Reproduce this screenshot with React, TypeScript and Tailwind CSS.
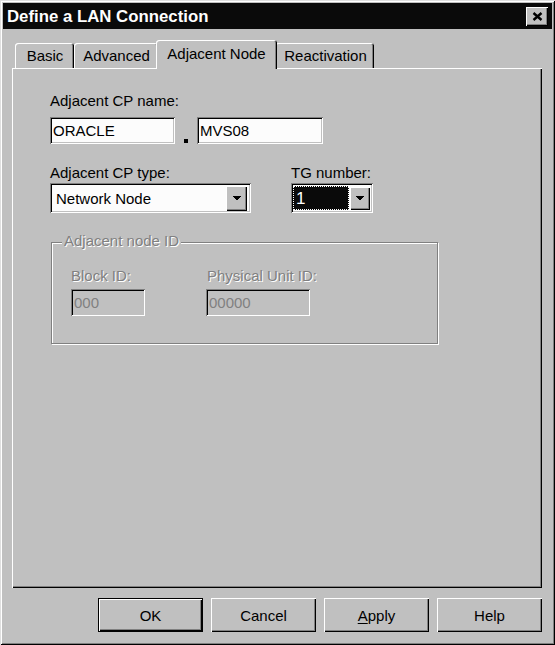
import React from "react";

const raised =
  "shadow-[inset_1px_1px_0_#ffffff,inset_-1px_-1px_0_#000000,inset_-2px_-2px_0_#808080]";
const sunken =
  "shadow-[inset_1px_1px_0_#808080,inset_-1px_-1px_0_#ffffff,inset_2px_2px_0_#000000,inset_-2px_-2px_0_#c0c0c0]";
const etched = "[text-shadow:1px_1px_0_#ffffff] text-[#808080] whitespace-nowrap";

function Arrow() {
  return (
    <svg width="8" height="4" viewBox="0 0 8 4" shapeRendering="crispEdges">
      <path d="M0 0h8v1h-1v1h-1v1h-1v1h-2v-1h-1v-1h-1v-1h-1z" fill="#000" />
    </svg>
  );
}

function Tab({ label, active, className }: { label: string; active?: boolean; className: string }) {
  return (
    <div
      className={
        "flex items-center justify-center rounded-t-[3px] bg-[#c0c0c0] shadow-[inset_1px_1px_0_#ffffff,inset_-1px_0_0_#000000,inset_-2px_0_0_#808080] " +
        (active ? "relative z-10 h-[29px] -mb-[1px] pb-[2px] " : "h-[25px] ") +
        className
      }
    >
      {label}
    </div>
  );
}

function Field({ value, className }: { value: string; className: string }) {
  return (
    <div className={"flex h-[27px] items-center bg-[#fcfcfc] pl-[3px] " + sunken + " " + className}>
      {value}
    </div>
  );
}

function Button({ children, primary }: { children: React.ReactNode; primary?: boolean }) {
  return (
    <div
      className={
        "flex h-[34px] w-[105px] items-center justify-center bg-[#c0c0c0] " +
        raised +
        (primary ? " border border-black" : "")
      }
    >
      {children}
    </div>
  );
}

export default function App() {
  return (
    <div className="flex h-[645px] w-[555px] flex-col bg-[#c0c0c0] p-[3px] font-['Liberation_Sans',Arial,sans-serif] text-[15px] leading-[17px] text-black shadow-[inset_1px_1px_0_#dfdfdf,inset_-1px_-1px_0_#000000,inset_2px_2px_0_#ffffff,inset_-2px_-2px_0_#808080]">
      {/* title bar */}
      <div className="flex h-[26px] shrink-0 items-center justify-between bg-[#0a0a0a] pl-[4px] pr-[4px]">
        <span className="text-[16.8px] font-bold text-white">Define a LAN Connection</span>
        <div className={"flex h-[19px] w-[22px] items-center justify-center bg-[#c0c0c0] " + raised}>
          <svg width="11" height="9" viewBox="0 0 11 9">
            <path d="M1.5 1L9.5 8M9.5 1L1.5 8" stroke="#000" strokeWidth="2.4" />
          </svg>
        </div>
      </div>

      {/* tabs */}
      <div className="mt-[11px] ml-[9px] mr-[10px] flex flex-1 flex-col">
        <div className="flex h-[28px] items-end pl-[3px]">
          <Tab label="Basic" className="w-[59px] pl-[1px]" />
          <Tab label="Advanced" className="w-[84px] pl-[1px]" />
          <Tab label="Adjacent Node" active className="-ml-[2px] -mr-[2px] w-[121px]" />
          <Tab label="Reactivation" className="w-[99px] pl-[2px]" />
        </div>

        <div className={"flex flex-1 flex-col bg-[#c0c0c0] pl-[38px] pt-[24px] " + raised}>
          <div>Adjacent CP name:</div>
          <div className="mt-[8px] flex">
            <Field value="ORACLE" className="w-[125px]" />
            <div className="flex w-[22px] items-end justify-center">
              <div className="mb-[1px] h-[4px] w-[4px] bg-black" />
            </div>
            <Field value="MVS08" className="w-[126px]" />
          </div>

          <div className="mt-[20px] flex gap-[40px]">
            <div className="flex w-[201px] flex-col">
              <div>Adjacent CP type:</div>
              <div className={"mt-[2px] flex h-[30px] items-center justify-between bg-[#fcfcfc] pl-[6px] pr-[4px] " + sunken}>
                <span>Network Node</span>
                <div className={"flex h-[25px] w-[21px] items-center justify-center bg-[#c0c0c0] " + raised}>
                  <Arrow />
                </div>
              </div>
            </div>
            <div className="flex w-[82px] flex-col">
              <div className="whitespace-nowrap">TG number:</div>
              <div className={"mt-[2px] flex h-[30px] items-center justify-between bg-[#fcfcfc] pl-[2px] pr-[3px] " + sunken}>
                <div className="flex h-[24px] w-[56px] items-center border border-dotted border-white bg-[#0a0a0a] pl-[2px] text-[17px] text-white">
                  1
                </div>
                <div className={"flex h-[23px] w-[20px] items-center justify-center bg-[#c0c0c0] " + raised}>
                  <Arrow />
                </div>
              </div>
            </div>
          </div>

          {/* group box */}
          <div className="relative mt-[29px] ml-[1px] h-[102px] w-[387px] border border-[#808080] pl-[19px] pt-[24px] shadow-[1px_1px_0_#ffffff,inset_1px_1px_0_#ffffff]">
            <span className={"absolute -top-[11px] left-[10px] bg-[#c0c0c0] px-[2px] " + etched}>
              Adjacent node ID
            </span>
            <div className="flex gap-[61px]">
              <div className="flex w-[74px] flex-col">
                <div className={etched}>Block ID:</div>
                <div className={"mt-[5px] flex h-[27px] items-center pl-[3px] text-[#808080] " + sunken}>000</div>
              </div>
              <div className="flex w-[104px] flex-col">
                <div className={"pl-[1px] " + etched}>Physical Unit ID:</div>
                <div className={"mt-[5px] flex h-[27px] items-center pl-[3px] text-[#808080] " + sunken}>00000</div>
              </div>
            </div>
          </div>
        </div>
      </div>

      {/* buttons */}
      <div className="my-[10px] mr-[10px] flex shrink-0 justify-end gap-[8px]">
        <Button primary>OK</Button>
        <Button>Cancel</Button>
        <Button>
          <span>
            <span className="underline underline-offset-[2px]">A</span>pply
          </span>
        </Button>
        <Button>Help</Button>
      </div>
    </div>
  );
}
